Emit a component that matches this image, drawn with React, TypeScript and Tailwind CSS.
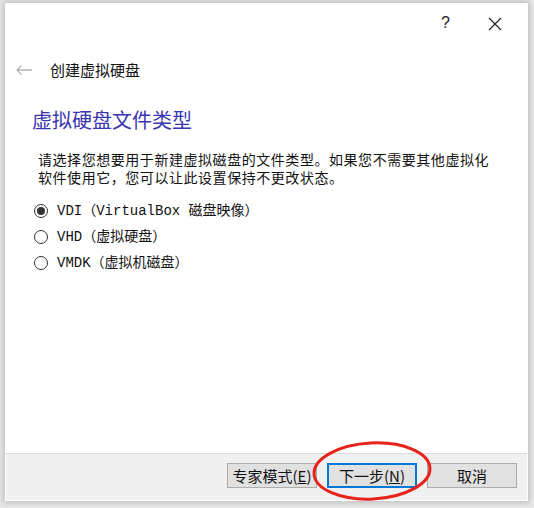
import React, { useState } from 'react';

const cjk = '"Noto Sans CJK SC", sans-serif';
const mono = '"Liberation Mono", "Noto Sans CJK SC", monospace';

const options = [
  { id: 'vdi', label: 'VDI（VirtualBox 磁盘映像）' },
  { id: 'vhd', label: 'VHD（虚拟硬盘）' },
  { id: 'vmdk', label: 'VMDK（虚拟机磁盘）' },
];

const Radio: React.FC<{ checked: boolean }> = ({ checked }) => (
  <span className="w-[14px] h-[14px] rounded-full border border-[#333333] bg-white flex items-center justify-center shrink-0">
    {checked && <span className="w-[8px] h-[8px] rounded-full bg-[#333333]" />}
  </span>
);

export default function App() {
  const [selected, setSelected] = useState('vdi');

  return (
    <div className="w-[534px] h-[508px] bg-[#e9e9e9] pl-[5px] pt-[3px] overflow-hidden">
      <div
        className="relative w-[523px] h-[498px] bg-white flex flex-col shadow-[0_0_6px_2px_rgba(0,0,0,0.18)]"
        style={{ fontFamily: cjk }}
      >
        {/* title bar */}
        <div className="h-[40px] flex items-center justify-end pr-[26px] gap-[38px] text-[#1a1a1a]">
          <span className="text-[16px] leading-none" style={{ fontFamily: '"Liberation Sans", sans-serif' }}>?</span>
          <svg width="14" height="14" viewBox="0 0 14 14" className="mt-[1px]">
            <path d="M1 1 L13 13 M13 1 L1 13" stroke="#1a1a1a" strokeWidth="1.1" fill="none" />
          </svg>
        </div>

        {/* header row */}
        <div className="h-[56px] flex items-center pl-[10px] -mt-[1px]">
          <svg width="18" height="12" viewBox="0 0 18 12" className="mr-[17px]">
            <path d="M17 6 H2 M6.5 1.5 L2 6 L6.5 10.5" stroke="#b3b3b3" strokeWidth="1.3" fill="none" />
          </svg>
          <span className="text-[15px] text-[#111111]">创建虚拟硬盘</span>
        </div>

        {/* body */}
        <div className="flex flex-col pl-[27px] pr-[10px]">
          <h1 className="text-[20px] leading-[24px] text-[#3a36b0] mt-[10px]">虚拟硬盘文件类型</h1>

          <div className="mt-[18px] ml-[6px] text-[14px] leading-[18px] text-[#111111] whitespace-nowrap tracking-[0.55px]">
            <div>请选择您想要用于新建虚拟磁盘的文件类型。如果您不需要其他虚拟化</div>
            <div>软件使用它，您可以让此设置保持不更改状态。</div>
          </div>

          <div className="mt-[12px] ml-[2px] flex flex-col">
            {options.map((o) => (
              <label
                key={o.id}
                onClick={() => setSelected(o.id)}
                className="h-[26px] flex items-center gap-[9px] cursor-default"
              >
                <Radio checked={selected === o.id} />
                <span className="text-[14px] text-[#111111] whitespace-pre" style={{ fontFamily: mono }}>
                  {o.label}
                </span>
              </label>
            ))}
          </div>
        </div>

        <div className="flex-1" />

        {/* footer */}
        <div className="h-[47px] border-t border-[#dadada] bg-[#f0f0f0] flex items-start justify-end gap-[10px] pr-[10px] pt-[9px] mx-[1px] mb-[1px]">
          <button className="w-[90px] h-[25px] bg-[#e1e1e1] border border-[#adadad] text-[15px] text-[#111111] leading-none">
            专家模式(<span className="underline">E</span>)
          </button>
          <button className="w-[90px] h-[25px] bg-[#e1e1e1] border-2 border-[#0078d7] text-[15px] text-[#111111] leading-none">
            下一步(<span className="underline">N</span>)
          </button>
          <button className="w-[90px] h-[25px] bg-[#e1e1e1] border border-[#adadad] text-[15px] text-[#111111] leading-none">
            取消
          </button>
        </div>

        {/* red annotation ellipse */}
        <svg className="absolute left-[305px] top-[436px] pointer-events-none" width="130" height="66" viewBox="0 0 130 66">
          <ellipse cx="62" cy="32" rx="58" ry="28" fill="none" stroke="#e8221b" strokeWidth="3" transform="rotate(-3 62 32)" />
        </svg>
      </div>
    </div>
  );
}
